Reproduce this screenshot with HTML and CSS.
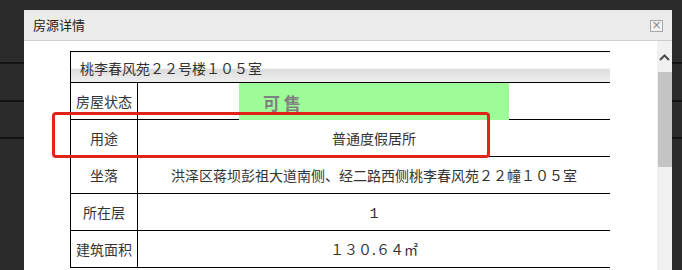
FILE: index.html
```html
<!DOCTYPE html>
<html lang="zh-CN">
<head>
    <meta charset="UTF-8">
    <title>房源详情</title>
    <link rel="stylesheet" href="styles.css">
</head>
<body>

    <div class="dialog">
        <div class="dialog-header">
            <span class="dialog-title">房源详情</span>
            <span class="close">&times;</span>
        </div>

        <div class="dialog-body">
            <div class="content">
                <div class="table-wrap">
                    <table class="info-table">
                        <tr class="head-row">
                            <td colspan="2">桃李春风苑２２号楼１０５室</td>
                        </tr>
                        <tr>
                            <td class="label">房屋状态</td>
                            <td class="value status-cell">
                                <div class="stamp">可 售</div>
                            </td>
                        </tr>
                        <tr>
                            <td class="label">用途</td>
                            <td class="value">普通度假居所</td>
                        </tr>
                        <tr>
                            <td class="label">坐落</td>
                            <td class="value">洪泽区蒋坝彭祖大道南侧、经二路西侧桃李春风苑２２幢１０５室</td>
                        </tr>
                        <tr>
                            <td class="label">所在层</td>
                            <td class="value"><span class="num">1</span></td>
                        </tr>
                        <tr>
                            <td class="label">建筑面积</td>
                            <td class="value">１３０.６４㎡</td>
                        </tr>
                    </table>
                    <div class="highlight"></div>
                </div>
            </div>

            <div class="scrollbar">
                <div class="scroll-up">
                    <svg width="11" height="7" viewBox="0 0 11 7">
                        <path d="M1 6 L5.5 1.5 L10 6" fill="none" stroke="#4a4a4a" stroke-width="2"/>
                    </svg>
                </div>
                <div class="scroll-thumb"></div>
            </div>
        </div>
    </div>

</body>
</html>
```

FILE: styles.css
```css
* {
    box-sizing: border-box;
    margin: 0;
    padding: 0;
}

body {
    font-family: "Noto Sans CJK SC", "Noto Sans", sans-serif;
    width: 682px;
    height: 270px;
    overflow: hidden;
    padding: 10px 10px 0 24px;
    background:
        linear-gradient(#141414, #141414) 0 62px / 100% 2px no-repeat,
        linear-gradient(#141414, #141414) 0 100px / 100% 2px no-repeat,
        linear-gradient(#141414, #141414) 0 137px / 100% 2px no-repeat,
        #2b2b2b;
    color: #333;
}

.dialog {
    width: 648px;
    height: 260px;
    background-color: #fff;
    display: flex;
    flex-direction: column;
    overflow: hidden;
}

.dialog-header {
    height: 31px;
    flex: none;
    background-color: #ebebeb;
    border-bottom: 1px solid #cfcfcf;
    display: flex;
    align-items: center;
    justify-content: space-between;
    padding: 0 9px 2px 9px;
}

.dialog-title {
    font-size: 13px;
    color: #222;
    line-height: 1;
}

.close {
    width: 13px;
    height: 12px;
    border: 1px solid #a8a8a8;
    background-color: #f2f2f2;
    color: #8a8a8a;
    font-family: "DejaVu Sans", sans-serif;
    font-size: 12px;
    line-height: 9px;
    text-align: center;
    margin-top: 3px;
}

.dialog-body {
    flex: 1;
    display: flex;
}

.content {
    flex: 1;
    padding: 10px 0 0 46px;
}

.table-wrap {
    position: relative;
    width: 540px;
}

.info-table {
    width: 540px;
    border-collapse: collapse;
    font-size: 14px;
    color: #333;
}

.info-table td {
    border-top: 1px solid #000;
    border-bottom: 1px solid #000;
    border-left: 1px solid #000;
    height: 37px;
    padding: 0;
    white-space: nowrap;
}

.head-row td {
    height: 31px;
    text-align: left;
    padding: 2px 0 0 9px;
    background: linear-gradient(#fff 0%, #fff 52%, #dcdcdc 56%, #f0f0f0 100%);
}

.label {
    width: 67px;
    text-align: center;
}

.value {
    text-align: center;
}

.num {
    font-family: "Liberation Mono", monospace;
    font-size: 15px;
}

.status-cell {
    position: relative;
}

.stamp {
    position: absolute;
    left: 101px;
    top: 0;
    width: 270px;
    height: 37px;
    background-color: #9dfc98;
    color: #808080;
    font-size: 17px;
    font-weight: bold;
    text-align: left;
    padding: 7px 0 0 24px;
}

.highlight {
    position: absolute;
    left: -18px;
    top: 61px;
    width: 438px;
    height: 46px;
    border: 3px solid #e2231a;
    border-radius: 4px;
}

.scrollbar {
    width: 15px;
    flex: none;
    background-color: #f0f0f0;
}

.scroll-up {
    height: 31px;
    display: flex;
    justify-content: center;
    padding-top: 13px;
}

.scroll-thumb {
    height: 95px;
    background-color: #c4c4c4;
    margin-left: 1px;
}
```
